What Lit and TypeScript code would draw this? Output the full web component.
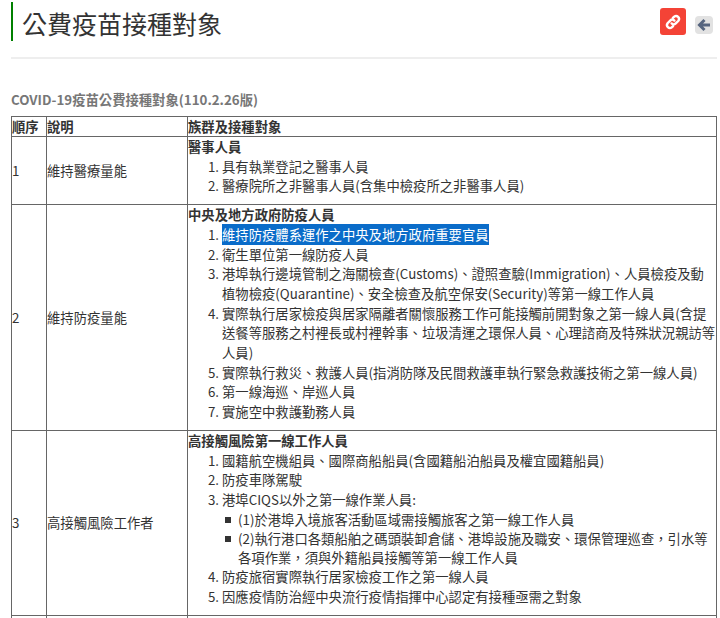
import { LitElement, html, css } from "lit";
import { customElement } from "lit/decorators.js";

@customElement("app-root")
export class AppRoot extends LitElement {
  static styles = css`
    :host {
      display: block;
      height: 618px;
      overflow: hidden;
      background: #fff;
      color: #333;
      font-family: "Noto Sans CJK TC", "Noto Sans", sans-serif;
      font-size: 13.33px;
      line-height: 19.7px;
    }
    .page { padding: 2px 3px 0 11px; }
    .head {
      display: flex;
      justify-content: space-between;
      height: 55px;
      border-bottom: 2px solid #eee;
    }
    h1 {
      margin: 0;
      height: 39px;
      border-left: 2px solid #008000;
      padding-left: 9px;
      font-size: 25px;
      line-height: 43px;
      font-weight: 400;
      color: #333;
    }
    .tools { display: flex; gap: 9px; padding: 6px 0 0 0; align-items: flex-start; margin-right: 4px; }
    .link {
      width: 26px; height: 27px; border-radius: 3px; background: #f44336;
      display: flex; align-items: center; justify-content: center;
    }
    .back {
      width: 18px; height: 18px; border-radius: 4px; background: #e2e2e2; margin-top: 8px;
      display: flex; align-items: center; justify-content: center;
    }
    h2 {
      margin: 31px 0 6px;
      font-size: 13.33px;
      line-height: 20px;
      font-weight: 700;
      color: #777;
    }
    table { border-collapse: collapse; width: 706px; table-layout: fixed; }
    th, td { border: 1px solid #666; padding: 0; vertical-align: middle; text-align: left; color: #333; }
    th { font-weight: 700; line-height: 19px; }
    .c1 { width: 35px; }
    .c2 { width: 141px; }
    .t { font-weight: 700; }
    ol { margin: 0 0 8px; padding: 0 0 0 34px; }
    ul { margin: 0; padding: 0 0 0 16px; list-style: none; line-height: 19.2px; }
    ul li::before {
      content: "";
      display: inline-block;
      width: 6px;
      height: 6px;
      margin: 0 7px 0 -13px;
      vertical-align: 2px;
      background: #333;
    }
    .sel { background: #0a6cc9; color: #fff; box-shadow: 0 -1px 0 #0a6cc9, 0 1px 0 #0a6cc9; }
    .blank { height: 20px; }
  `;

  render() {
    return html`
      <div class="page">
        <div class="head">
          <h1>公費疫苗接種對象</h1>
          <div class="tools">
            <div class="link">
              <svg width="20" height="20" viewBox="0 0 20 20" fill="none" stroke="#fff" stroke-width="2.4" stroke-linecap="round">
                <path d="M8.6 11.4a3 3 0 0 0 4.2 0l2.6-2.6a3 3 0 0 0-4.2-4.2L9.9 5.9" />
                <path d="M11.4 8.6a3 3 0 0 0-4.2 0l-2.6 2.6a3 3 0 0 0 4.2 4.2l1.3-1.3" />
              </svg>
            </div>
            <div class="back">
              <svg width="14" height="14" viewBox="0 0 14 14" fill="none" stroke="#56657f" stroke-width="3">
                <path d="M13 7H3M7.5 2 2.5 7l5 5" />
              </svg>
            </div>
          </div>
        </div>
        <h2>COVID-19疫苗公費接種對象(110.2.26版)</h2>
        <table>
          <colgroup><col class="c1" /><col class="c2" /><col /></colgroup>
          <tr><th>順序</th><th>說明</th><th>族群及接種對象</th></tr>
          <tr>
            <td>1</td><td>維持醫療量能</td>
            <td>
              <div class="t">醫事人員</div>
              <ol>
                <li>具有執業登記之醫事人員</li>
                <li>醫療院所之非醫事人員(含集中檢疫所之非醫事人員)</li>
              </ol>
            </td>
          </tr>
          <tr>
            <td>2</td><td>維持防疫量能</td>
            <td>
              <div class="t">中央及地方政府防疫人員</div>
              <ol>
                <li><span class="sel">維持防疫體系運作之中央及地方政府重要官員</span></li>
                <li>衛生單位第一線防疫人員</li>
                <li>港埠執行邊境管制之海關檢查(Customs)、證照查驗(Immigration)、人員檢疫及動植物檢疫(Quarantine)、安全檢查及航空保安(Security)等第一線工作人員</li>
                <li>實際執行居家檢疫與居家隔離者關懷服務工作可能接觸前開對象之第一線人員(含提送餐等服務之村裡長或村裡幹事、垃圾清運之環保人員、心理諮商及特殊狀況親訪等人員)</li>
                <li>實際執行救災、救護人員(指消防隊及民間救護車執行緊急救護技術之第一線人員)</li>
                <li>第一線海巡、岸巡人員</li>
                <li>實施空中救護勤務人員</li>
              </ol>
            </td>
          </tr>
          <tr>
            <td>3</td><td>高接觸風險工作者</td>
            <td>
              <div class="t">高接觸風險第一線工作人員</div>
              <ol>
                <li>國籍航空機組員、國際商船船員(含國籍船泊船員及權宜國籍船員)</li>
                <li>防疫車隊駕駛</li>
                <li>港埠CIQS以外之第一線作業人員:
                  <ul>
                    <li>(1)於港埠入境旅客活動區域需接觸旅客之第一線工作人員</li>
                    <li>(2)執行港口各類船舶之碼頭裝卸倉儲、港埠設施及職安、環保管理巡查，引水等各項作業，須與外籍船員接觸等第一線工作人員</li>
                  </ul>
                </li>
                <li>防疫旅宿實際執行居家檢疫工作之第一線人員</li>
                <li>因應疫情防治經中央流行疫情指揮中心認定有接種亟需之對象</li>
              </ol>
            </td>
          </tr>
          <tr><td><div class="blank"></div></td><td></td><td></td></tr>
        </table>
      </div>
    `;
  }
}
